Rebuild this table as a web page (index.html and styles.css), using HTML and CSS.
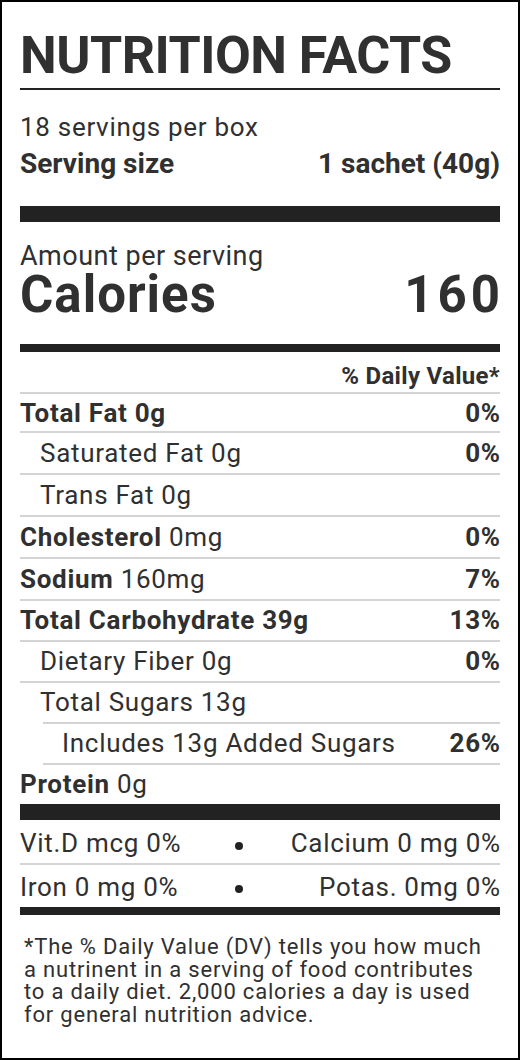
FILE: index.html
```html
<!DOCTYPE html>
<html lang="en">
<head>
<meta charset="utf-8">
<title>Nutrition Facts</title>
<link rel="stylesheet" href="styles.css">
</head>
<body>
<section class="label">
  <h1 class="title">NUTRITION FACTS</h1>
  <p class="servings">18 servings per box</p>
  <div class="serving-size">
    <span>Serving size</span>
    <span>1 sachet (40g)</span>
  </div>
  <div class="bar bar--thick"></div>
  <p class="amount">Amount per serving</p>
  <div class="calories">
    <span>Calories</span>
    <span class="cal-num">160</span>
  </div>
  <div class="bar bar--medium"></div>
  <div class="dv-head">% Daily Value*</div>
  <div class="row row--first"><span><b>Total Fat 0g</b></span><b class="end">0%</b></div>
  <div class="row indent-1"><span>Saturated Fat 0g</span><b class="end">0%</b></div>
  <div class="row indent-1"><span>Trans Fat 0g</span></div>
  <div class="row"><span><b>Cholesterol</b> 0mg</span><b class="end">0%</b></div>
  <div class="row"><span><b>Sodium</b> 160mg</span><b class="end">7%</b></div>
  <div class="row row--tight"><span><b>Total Carbohydrate 39g</b></span><b class="end">13%</b></div>
  <div class="row row--tight indent-1"><span>Dietary Fiber 0g</span><b class="end">0%</b></div>
  <div class="row row--tight row--open indent-1"><span>Total Sugars 13g</span></div>
  <div class="row row--tight row--sub"><span>Includes 13g Added Sugars</span><b class="end">26%</b></div>
  <div class="row row--tight row--last"><span><b>Protein</b> 0g</span></div>
  <div class="bar bar--thick"></div>
  <div class="vit vit--first">
    <span>Vit.D mcg 0%</span><span class="dot"></span><span class="vit-right end">Calcium 0 mg 0%</span>
  </div>
  <div class="vit vit--second">
    <span>Iron 0 mg 0%</span><span class="dot"></span><span class="vit-right end">Potas. 0mg 0%</span>
  </div>
  <div class="bar bar--medium"></div>
  <p class="footnote">*The % Daily Value (DV) tells you how much<br>a nutrinent in a serving of food contributes<br>to a daily diet. 2,000 calories a day is used<br>for general nutrition advice.</p>
</section>
</body>
</html>
```

FILE: styles.css
```css
html, body {
  margin: 0;
  padding: 0;
  background: #fff;
}

.label {
  box-sizing: border-box;
  width: 520px;
  height: 1060px;
  border: 2px solid #000;
  padding: 24px 18px 0;
  font-family: Roboto, "Liberation Sans", sans-serif;
  color: #303030;
  font-size: 26px;
  letter-spacing: 0.7px;
}

.label p,
.label h1 {
  margin: 0;
}

.end {
  margin-right: -0.7px;
}

.title {
  font-size: 52px;
  font-weight: 700;
  letter-spacing: -0.5px;
  line-height: 60px;
  padding-bottom: 2px;
  border-bottom: 2px solid #222;
}

.servings {
  margin-top: 22px !important;
  line-height: 31px;
}

.serving-size {
  display: flex;
  justify-content: space-between;
  font-size: 28px;
  font-weight: 700;
  letter-spacing: 0;
  line-height: 41px;
}

.bar {
  background: #222;
}

.bar--thick {
  height: 16px;
}

.serving-size + .bar {
  margin-top: 22px;
}

.bar--medium {
  height: 8px;
}

.amount {
  margin-top: 19px !important;
  font-size: 27px;
  letter-spacing: 0.5px;
  line-height: 30px;
}

.calories {
  display: flex;
  justify-content: space-between;
  font-size: 51px;
  font-weight: 700;
  letter-spacing: 1px;
  line-height: 48px;
}

.cal-num {
  letter-spacing: 4px;
  margin-right: -4px;
}

.calories + .bar {
  margin-top: 25px;
}

.dv-head {
  text-align: right;
  font-size: 24px;
  font-weight: 700;
  letter-spacing: 0.3px;
  padding-top: 8px;
  line-height: 32px;
  border-bottom: 2px solid #d4d4d4;
}

.row {
  display: flex;
  justify-content: space-between;
  line-height: 40px;
  border-bottom: 2px solid #d4d4d4;
}

.row b {
  font-weight: 700;
}

.row--first {
  padding-top: 1px;
  line-height: 36px;
}

.row--tight {
  line-height: 39px;
}

.row--open {
  border-bottom: 0;
}

.row--sub {
  margin-left: 23px;
  padding-left: 19px;
  border-top: 2px solid #d4d4d4;
}

.row--last {
  border-bottom: 0;
}

.indent-1 {
  padding-left: 20px;
}

.vit {
  display: grid;
  grid-template-columns: 200px 38px 1fr;
  align-items: center;
}

.vit--first {
  padding-top: 4px;
  line-height: 39px;
  border-bottom: 2px solid #d4d4d4;
}

.vit--second {
  padding-top: 2px;
  line-height: 40px;
}

.vit-right {
  text-align: right;
}

.dot {
  justify-self: center;
  width: 8px;
  height: 8px;
  border-radius: 50%;
  background: #222;
  margin-top: 4px;
}

.footnote {
  margin-top: 21px !important;
  padding: 0 4px;
  font-size: 22px;
  letter-spacing: 0.8px;
  line-height: 22.7px;
}
```
